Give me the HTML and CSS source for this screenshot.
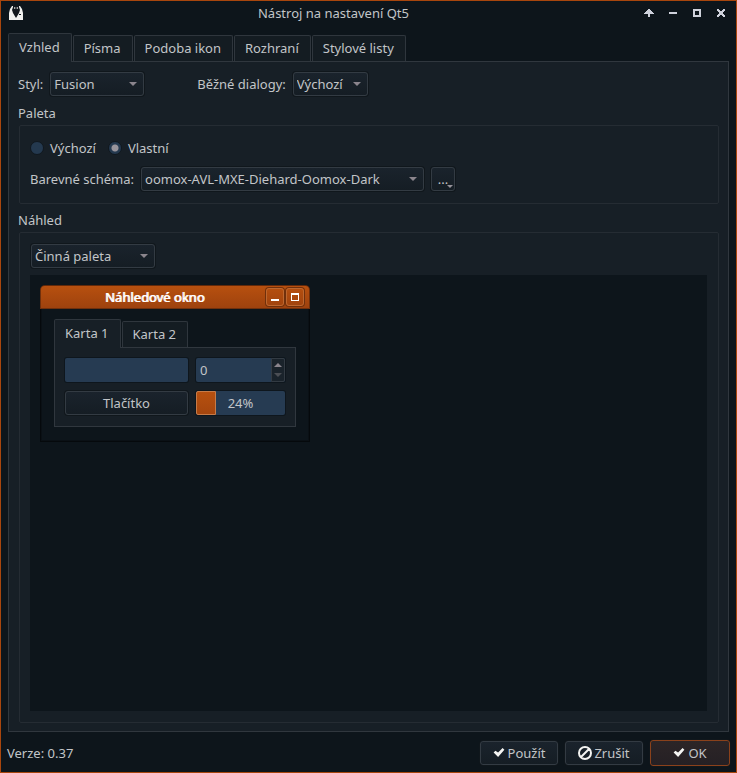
FILE: index.html
```html
<!DOCTYPE html>
<html lang="cs">
<head>
<meta charset="utf-8">
<title>Nástroj na nastavení Qt5</title>
<link rel="stylesheet" href="styles.css">
</head>
<body>
<header class="titlebar">
  <svg class="app-icon" viewBox="0 0 14 14" aria-hidden="true">
    <path fill="#f0f0ee" d="M3 0h8l2 3 1 4v7H0V7l1-4z"/>
    <path fill="#10161b" d="M4 0h6v1l1 3-1 3-3 5-3-5-1-3 1-3z"/>
    <path fill="#d8d8d8" d="M5 1l2 1 2-1v2L7 2 5 3z"/>
    <path fill="#10161b" d="M10 8h2v1h-2z"/>
  </svg>
  <h1 class="title">Nástroj na nastavení Qt5</h1>
  <div class="window-buttons">
    <button type="button" aria-label="Zarolovat"><svg viewBox="0 0 10 8"><path d="M4 0h2v1h1v1h1v1h1v1h1v1H6v3H4V5H0V4h1V3h1V2h1V1h1z"/></svg></button>
    <button type="button" aria-label="Minimalizovat"><svg viewBox="0 0 10 8"><path d="M1 3h8v2H1z"/></svg></button>
    <button type="button" aria-label="Maximalizovat"><svg viewBox="0 0 10 8"><path fill-rule="evenodd" d="M1 0h8v8H1zM3 2v4h4V2z"/></svg></button>
    <button type="button" aria-label="Zavřít"><svg viewBox="0 0 10 8"><path d="M1 0h2v1h1v1h2V1h1V0h2v2H8v1H7v2h1v1h1v2H7V7H6V6H4v1H3v1H1V6h1V5h1V3H2V2H1z"/></svg></button>
  </div>
</header>

<main class="main">
  <nav class="tabs" role="tablist">
    <button type="button" class="tab tab-active" role="tab" aria-selected="true">Vzhled</button>
    <button type="button" class="tab" role="tab">Písma</button>
    <button type="button" class="tab" role="tab">Podoba ikon</button>
    <button type="button" class="tab" role="tab">Rozhraní</button>
    <button type="button" class="tab" role="tab">Stylové listy</button>
  </nav>

  <section class="panel">
    <div class="row">
      <label for="style">Styl:</label>
      <span class="combo combo-style"><select id="style"><option>Fusion</option></select></span>
      <label class="second-label" for="dialogs">Běžné dialogy:</label>
      <span class="combo combo-dialogs"><select id="dialogs"><option>Výchozí</option></select></span>
    </div>

    <h2 class="group-title">Paleta</h2>
    <div class="group">
      <div class="radios">
        <label><input type="radio" name="palette">Výchozí</label>
        <label><input type="radio" name="palette" checked>Vlastní</label>
      </div>
      <div class="row">
        <label for="scheme">Barevné schéma:</label>
        <span class="combo combo-scheme"><select id="scheme"><option>oomox-AVL-MXE-Diehard-Oomox-Dark</option></select></span>
        <button type="button" class="button more">...</button>
      </div>
    </div>

    <h2 class="group-title">Náhled</h2>
    <div class="group group-preview">
      <span class="combo combo-preview"><select aria-label="Paleta náhledu"><option>Činná paleta</option></select></span>
      <div class="canvas">
        <div class="subwindow">
          <div class="sub-title">
            <span class="sub-name">Náhledové okno</span>
            <button type="button" aria-label="Minimalizovat náhled"><svg viewBox="0 0 16 16"><path d="M4 10h8v2H4z"/></svg></button>
            <button type="button" aria-label="Maximalizovat náhled"><svg viewBox="0 0 16 16"><path fill-rule="evenodd" d="M4 4h8v8H4zM5 6v5h6V6z"/></svg></button>
          </div>
          <div class="sub-body">
            <div class="tabs" role="tablist">
              <button type="button" class="tab tab-active" role="tab" aria-selected="true">Karta 1</button>
              <button type="button" class="tab" role="tab">Karta 2</button>
            </div>
            <div class="sub-pane">
              <input class="field" type="text" aria-label="Text">
              <div class="spin">
                <input class="spin-value" type="text" value="0" aria-label="Číslo">
                <div class="spin-buttons">
                  <button type="button" aria-label="Zvýšit"><svg viewBox="0 0 8 4"><path d="M0 4l4-4 4 4z"/></svg></button>
                  <button type="button" aria-label="Snížit"><svg class="dim" viewBox="0 0 8 4"><path d="M0 0h8L4 4z"/></svg></button>
                </div>
              </div>
              <button type="button" class="button">Tlačítko</button>
              <div class="progress" role="progressbar" aria-valuenow="24" aria-label="Průběh"><span class="bar"></span><span class="percent">24%</span></div>
            </div>
          </div>
        </div>
      </div>
    </div>
  </section>
</main>

<footer class="footer">
  <span class="version">Verze: 0.37</span>
  <button type="button" class="button action"><svg viewBox="0 0 12 10"><path d="M0 5l2-2 3 2 5-5 2 2-7 8z"/></svg>Použít</button>
  <button type="button" class="button action cancel"><svg viewBox="0 0 14 14"><path class="ring" d="M7 1a6 6 0 1 0 0 12A6 6 0 1 0 7 1zM3 11l8-8"/></svg>Zrušit</button>
  <button type="button" class="button action default"><svg viewBox="0 0 12 10"><path d="M0 5l2-2 3 2 5-5 2 2-7 8z"/></svg>OK</button>
</footer>
</body>
</html>
```
FILE: styles.css
```css
* {
  box-sizing: border-box;
}

body {
  margin: 0;
  min-height: 100vh;
  display: flex;
  flex-direction: column;
  border: 1px solid #a8460d;
  background: #0d151b;
  color: #c2c5c8;
  font: 13px/18px "Noto Sans", sans-serif;
}

button,
input,
select {
  margin: 0;
  padding: 0;
  border: 0;
  background: none;
  color: inherit;
  font: inherit;
}

svg {
  display: block;
}

.titlebar {
  display: flex;
  align-items: center;
  height: 32px;
  padding: 0 10px 8px 8px;
}

.app-icon {
  width: 14px;
  height: 14px;
}

.title {
  flex: 1;
  margin: 0;
  font-size: 13px;
  font-weight: 400;
  text-align: center;
}

.window-buttons {
  display: flex;
  gap: 14px;
}

.window-buttons svg {
  width: 10px;
  height: 8px;
  fill: #cfd2dc;
}

.main {
  flex: 1;
  display: flex;
  flex-direction: column;
  padding: 0 7px;
}

.tabs {
  display: flex;
  align-items: flex-end;
  gap: 1px;
  height: 28px;
}

.tab {
  height: 26px;
  padding: 0 11px 2px 10px;
  border: 1px solid #2f363d;
  border-bottom: 0;
  border-radius: 2px 2px 0 0;
  background: #141c22;
}

.tab-active {
  position: relative;
  height: 29px;
  margin-bottom: -1px;
  background: #171f26;
}

.panel {
  flex: 1;
  display: flex;
  flex-direction: column;
  padding: 10px 9px 8px;
  border: 1px solid #30373e;
  background: #171f26;
}

.row {
  display: flex;
  align-items: center;
  gap: 7px;
  padding-bottom: 1px;
}

.second-label {
  margin-left: 46px;
}

.combo {
  position: relative;
  display: block;
  height: 24px;
}

.combo::after {
  content: "";
  position: absolute;
  top: 10px;
  right: 7px;
  border: 4px solid transparent;
  border-top-color: #8b858d;
  border-bottom: 0;
  pointer-events: none;
}

.combo select {
  appearance: none;
  width: 100%;
  height: 24px;
  padding: 0 3px;
}

.combo select,
.button {
  border: 1px solid #333b43;
  border-radius: 3px;
  background: linear-gradient(#1a232c, #151d24);
  box-shadow: 0 0 0 1px #10171c;
}

.combo-style {
  width: 94px;
}

.combo-dialogs {
  width: 75px;
}

.combo-scheme {
  width: 283px;
}

.combo-preview {
  width: 124px;
}

.group-title {
  margin: 7px 0 3px;
  font-size: 13px;
  font-weight: 400;
}

.group {
  margin-left: 1px;
  padding: 13px 11px 11px 10px;
  border: 1px solid #252c33;
  border-radius: 2px;
}

.radios {
  display: flex;
  gap: 12px;
  margin-bottom: 10px;
}

.radios label {
  display: flex;
  align-items: center;
  gap: 6px;
}

.radios input {
  appearance: none;
  width: 14px;
  height: 14px;
  border: 1px solid #10181f;
  border-radius: 50%;
  background: #24394f;
}

.radios input:checked {
  background: radial-gradient(circle, #98949b 3px, #24394f 4px);
}

.more {
  position: relative;
  width: 24px;
  height: 24px;
}

.more::after {
  content: "";
  position: absolute;
  right: 1px;
  bottom: 2px;
  border: 3px solid transparent;
  border-top-color: #98949b;
  border-bottom: 0;
}

.group-preview {
  flex: 1;
  display: flex;
  flex-direction: column;
  padding-top: 11px;
}

.group-preview .combo {
  margin-left: 1px;
}

.canvas {
  flex: 1;
  margin-top: 7px;
  padding: 10px;
  background: #0d151b;
}

.subwindow {
  width: 270px;
  border: 1px solid #05090c;
  border-top-color: #62290a;
  border-radius: 5px 5px 0 0;
  box-shadow: inset 0 0 0 1px #0a1015;
}

.sub-title {
  display: flex;
  align-items: center;
  gap: 2px;
  height: 23px;
  margin: 0 -1px;
  padding-right: 5px;
  border: 1px solid #70300c;
  border-top: 0;
  border-radius: 4px 4px 0 0;
  background: linear-gradient(#b7500f, #9e420e);
  color: #fff;
}

.sub-name {
  flex: 1;
  padding-left: 4px;
  text-align: center;
  text-shadow: 1px 0 #fff;
}

.sub-title button {
  border: 1px solid #bd672f;
  border-radius: 3px;
  box-shadow: 0 0 0 1px #70300c;
}

.sub-title svg {
  width: 16px;
  height: 16px;
  fill: #fff;
}

.sub-body {
  padding: 10px 13px 14px;
}

.sub-pane {
  display: grid;
  grid-template-columns: 123px 1fr;
  grid-auto-rows: 24px;
  gap: 9px 8px;
  padding: 10px 10px 11px;
  border: 1px solid #30373e;
  background: #171f26;
}

.field,
.spin,
.progress {
  min-width: 0;
  border-radius: 2px;
  background: #263b52;
  box-shadow: 0 0 0 1px #0e161d;
}

.spin {
  display: flex;
}

.spin-value {
  flex: 1;
  min-width: 0;
  padding-left: 4px;
}

.spin-buttons {
  display: flex;
  flex-direction: column;
  justify-content: center;
  gap: 6px;
  width: 14px;
  border: 1px solid #333b43;
  border-radius: 0 2px 2px 0;
  background: #1a232b;
}

.spin-buttons svg {
  width: 8px;
  height: 4px;
  margin: 0 auto;
  fill: #8b858d;
}

.spin-buttons .dim {
  fill: #4b4e54;
}

.progress {
  position: relative;
  display: grid;
  place-items: center;
}

.bar {
  position: absolute;
  inset: 0 auto 0 0;
  width: 20px;
  border: 1px solid #c67b48;
  border-radius: 2px 0 0 2px;
  background: linear-gradient(#b7500f, #a5460e);
}

.percent {
  position: relative;
}

.footer {
  display: flex;
  align-items: center;
  gap: 7px;
  height: 40px;
  padding: 1px 6px 0;
}

.version {
  flex: 1;
}

.action {
  display: flex;
  align-items: center;
  justify-content: center;
  gap: 3px;
  width: 78px;
  height: 24px;
}

.action svg {
  width: 12px;
  height: 9px;
  fill: #f4f4f2;
}

.cancel {
  gap: 2px;
}

.cancel svg {
  width: 14px;
  height: 14px;
}

.cancel .ring {
  fill: none;
  stroke: #f4f4f2;
  stroke-width: 2;
}

.default {
  width: 80px;
  height: 26px;
  border-color: #8a411b;
  background: linear-gradient(#2c2527, #252024);
}
```
